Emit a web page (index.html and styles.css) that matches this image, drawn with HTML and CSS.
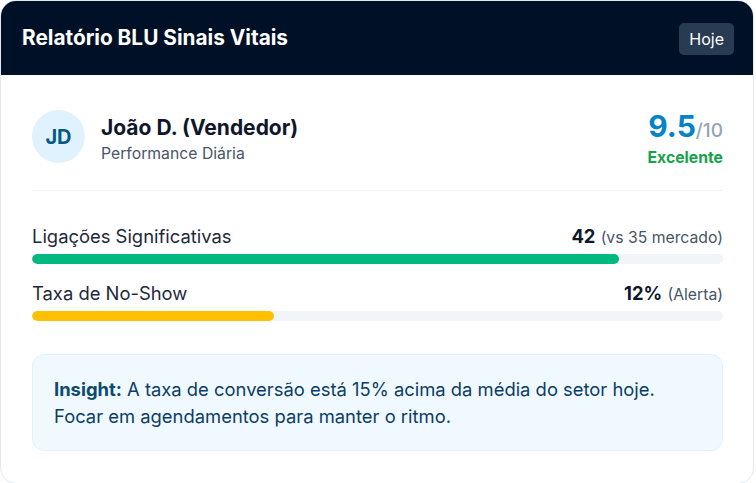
FILE: index.html
```html
<!DOCTYPE html>
<html lang="pt">
<head>
<meta charset="utf-8">
<link rel="stylesheet" href="styles.css">
</head>
<body>
<div class="card">
  <header class="head">
    <h1 class="title">Relatório BLU Sinais Vitais</h1>
    <button class="btn">Hoje</button>
  </header>
  <div class="content">
    <div class="profile">
      <div class="who">
        <div class="avatar">JD</div>
        <div class="names">
          <div class="name">João D. (Vendedor)</div>
          <div class="role">Performance Diária</div>
        </div>
      </div>
      <div class="score">
        <div class="score-num"><span class="big">9.5</span><span class="of">/10</span></div>
        <div class="grade">Excelente</div>
      </div>
    </div>
    <div class="metrics">
      <div class="metric">
        <div class="metric-row">
          <span class="label">Ligações Significativas</span>
          <span class="val"><b>42</b> <span class="note">(vs 35 mercado)</span></span>
        </div>
        <div class="track"><div class="fill green" style="width:85%"></div></div>
      </div>
      <div class="metric">
        <div class="metric-row">
          <span class="label">Taxa de No-Show</span>
          <span class="val"><b>12%</b> <span class="note">(Alerta)</span></span>
        </div>
        <div class="track"><div class="fill yellow" style="width:35%"></div></div>
      </div>
    </div>
    <div class="insight">
      <b>Insight:</b> A taxa de conversão está 15% acima da média do setor hoje. Focar em agendamentos para manter o ritmo.
    </div>
  </div>
</div>
</body>
</html>
```
FILE: styles.css
```css
* { box-sizing: border-box; }
html, body { margin: 0; padding: 0; background: #ffffff; }
body { font-family: Inter, "Noto Sans", sans-serif; }
.card {
  width: 754px;
  border: 1px solid #e2e8f0;
  border-radius: 16px;
  overflow: hidden;
  background: #fff;
}
.head {
  height: 74px;
  background: #001027;
  display: flex;
  align-items: center;
  justify-content: space-between;
  padding: 0 19px 0 21px;
}
.title {
  margin: 0;
  color: #fff;
  font-size: 20.8px;
  font-weight: 700;
  line-height: 28px;
}
.btn {
  font-family: inherit;
  font-size: 16px;
  color: #fff;
  background: #273b53;
  border: none;
  border-radius: 5px;
  height: 32px;
  padding: 0 10px;
  margin-top: 1px;
}
.content { padding: 31px 30px 32px 31px; }
.profile {
  display: flex;
  justify-content: space-between;
  align-items: flex-start;
  padding-bottom: 20px;
  border-bottom: 1px solid #f1f5f9;
}
.who { display: flex; align-items: flex-start; gap: 16px; }
.avatar {
  margin-top: 4px;
  width: 53px; height: 53px;
  border-radius: 50%;
  background: #e0f2fe;
  color: #075985;
  font-weight: 700;
  font-size: 20px;
  display: flex; align-items: center; justify-content: center;
}
.names { margin-top: 8px; }
.name { font-size: 21px; font-weight: 700; color: #0f172a; line-height: 27px; }
.role { font-size: 15.75px; color: #475569; line-height: 22px; margin-top: 2px; }
.score { text-align: right; margin-top: 2px; }
.score-num { font-size: 30px; line-height: 36px; }
.big { font-size: 30px; font-weight: 700; color: #0284c7; }
.of { font-size: 19px; line-height: 1; color: #94a3b8; font-weight: 500; }
.grade { font-size: 15.75px; font-weight: 700; color: #16a34a; line-height: 24px; margin-top: 2px; }
.metrics { padding-top: 32px; display: flex; flex-direction: column; gap: 16px; }
.metric-row {
  display: flex; justify-content: space-between; align-items: baseline;
  height: 27px; line-height: 27px; margin-bottom: 4px;
}
.label { font-size: 18.4px; color: #1e293b; }
.val { font-size: 18.4px; }
.val b { font-size: 18.4px; font-weight: 700; color: #0f172a; }
.note { font-size: 15.75px; color: #475569; }
.track { height: 10px; background: #f1f5f9; border-radius: 5px; overflow: hidden; }
.fill { height: 100%; border-radius: 5px; }
.green { background: #00b97f; }
.yellow { background: #ffc000; }
.insight {
  margin-top: 33px;
  background: #f0f9ff;
  border: 1px solid #e0f2fe;
  border-radius: 12px;
  padding: 21px 21px 20px;
  font-size: 18.4px;
  line-height: 27px;
  color: #0c3d66;
}
.insight b { font-weight: 700; color: #0c4a6e; }
```
